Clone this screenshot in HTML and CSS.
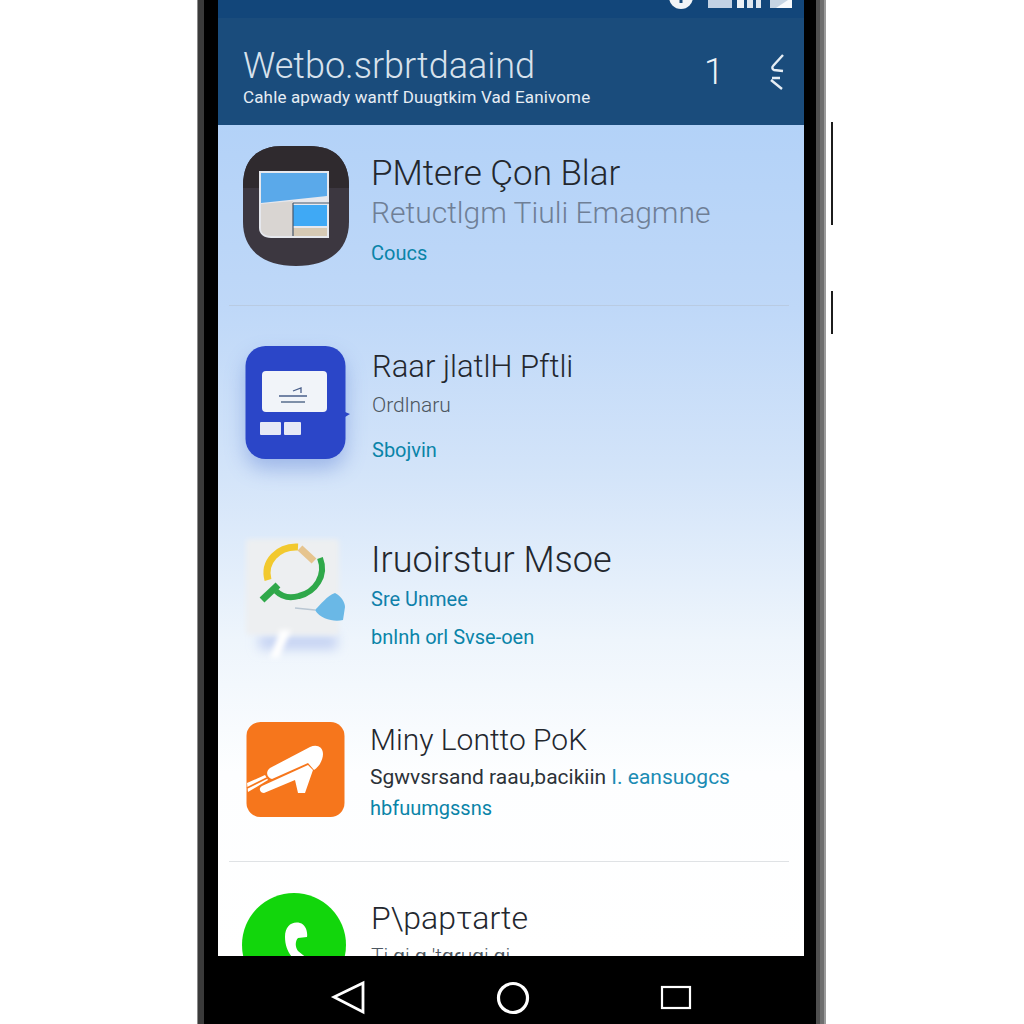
FILE: index.html
```html
<!DOCTYPE html>
<html lang="en">
<head>
<meta charset="utf-8">
<title>Phone app list</title>
<link rel="stylesheet" href="styles.css">
</head>
<body>
<div class="phone">
  <span class="side-btn side-btn-long"></span>
  <span class="side-btn side-btn-short"></span>
  <div class="screen">
    <header class="appbar">
      <div class="status">
        <svg class="status-icons" width="130" height="10" viewBox="0 0 130 10">
          <circle cx="13" cy="-3" r="12" fill="#f2f5f8"/>
          <path d="M13 0v3" stroke="#174a7c" stroke-width="3"/>
          <rect x="40" y="0" width="24" height="8" fill="#c3d2e4"/>
          <rect x="69" y="0" width="7" height="8" fill="#eef2f6"/>
          <rect x="79" y="0" width="6" height="8" fill="#dfe7ef"/>
          <rect x="88" y="0" width="5" height="8" fill="#dfe7ef"/>
          <path d="M102 0h22v8h-22z" fill="#c6d4e2"/>
          <path d="M108 8l12-8h4v8z" fill="#f7f9fb"/>
        </svg>
      </div>
      <div class="appbar-main">
        <div class="appbar-text">
          <div class="appbar-title">Wetbo.srbrtdaaind</div>
          <div class="appbar-sub">Cahle apwady wantf Duugtkim Vad Eanivome</div>
        </div>
        <div class="appbar-number">1</div>
        <svg class="appbar-icon" width="18" height="38" viewBox="0 0 18 38">
          <path d="M15 2L5 13c-1 1-1 3 1 4l9 1M4 25h8M3 27l11 9" fill="none" stroke="#e6edf4" stroke-width="2.4"/>
        </svg>
      </div>
    </header>
    <main class="list">
      <section class="row row-1">
        <svg class="icon icon-1" width="106" height="120" viewBox="0 0 106 120">
          <path d="M40 0h26c26 0 40 14 40 40v36c0 28-20 44-53 44S0 104 0 76V40C0 14 14 0 40 0z" fill="#3c3740"/>
          <path d="M40 0h26c26 0 40 14 40 40v2H0v-2C0 14 14 0 40 0z" fill="#2f2a2e"/>
          <path d="M16 25h70v67H28c-7 0-12-4-12-10z" fill="#e6e8ee"/>
          <path d="M18 27h66v23l-66 7z" fill="#5aa9ea"/>
          <path d="M18 58l32-3v35H28c-6 0-10-3-10-7z" fill="#d9d5d2"/>
          <path d="M50 59h34v21H50z" fill="#3fa9f5"/>
          <path d="M50 82h34v8H50z" fill="#d6c9b4"/>
          <path d="M50 57h36M50 57v33" stroke="#46586c" stroke-width="1.2"/>
        </svg>
        <div class="text">
          <div class="title title-1">PMtere Çon Blar</div>
          <div class="sub sub-gray">Retuctlgm Tiuli Emagmne</div>
          <div class="meta meta-1">Coucs</div>
        </div>
      </section>
      <section class="row row-2">
        <svg class="icon icon-2" width="106" height="114" viewBox="0 0 106 114">
          <rect x="0.5" y="0" width="100" height="113" rx="20" fill="#2b46c8"/>
          <path d="M100 66l5 2-5 3z" fill="#2b46c8"/>
          <rect x="17" y="25" width="65" height="41" rx="4" fill="#f1f4f9"/>
          <path d="M34 50h28M48 45l8-3v5" fill="none" stroke="#4a5f8a" stroke-width="1.3"/>
          <path d="M36 56h24" stroke="#7e8fa8" stroke-width="2"/>
          <rect x="15" y="76" width="21" height="13" rx="1" fill="#e6e9f6"/>
          <rect x="39" y="76" width="17" height="13" rx="1" fill="#e6e9f6"/>
        </svg>
        <div class="text">
          <div class="title title-2">Raar jlatlH Pftli</div>
          <div class="sub sub-small">Ordlnaru</div>
          <div class="meta meta-2">Sbojvin</div>
        </div>
      </section>
      <section class="row row-3">
        <svg class="icon icon-3" width="106" height="130" viewBox="0 0 106 130">
          <defs>
            <filter id="soft" filterUnits="userSpaceOnUse" x="-10" y="-10" width="126" height="150">
              <feGaussianBlur stdDeviation="2.5"/>
            </filter>
            <filter id="softer" filterUnits="userSpaceOnUse" x="-10" y="70" width="126" height="70">
              <feGaussianBlur stdDeviation="6"/>
            </filter>
          </defs>
          <rect x="16" y="99" width="78" height="14" fill="#c2d0f2" filter="url(#softer)"/>
          <rect x="3" y="3" width="93" height="96" rx="4" fill="#edeff1" filter="url(#soft)"/>
          <path d="M37 94h11l-12 28h-9z" fill="#fff" filter="url(#soft)"/>
          <path d="M25 44C20 26 35 10 55 11" fill="none" stroke="#f2c92e" stroke-width="7"/>
          <path d="M57 12l14 13" stroke="#e6c48e" stroke-width="7"/>
          <path d="M77 22C84 40 72 56 56 60 46 63 38 60 33 55" fill="none" stroke="#2fa84a" stroke-width="6"/>
          <path d="M35 49L19 64" stroke="#2fa84a" stroke-width="7"/>
          <path d="M52 72l20 2" stroke="#b9c6d2" stroke-width="1.5"/>
          <path d="M72 74C78 68 84 60 92 57 98 60 102 66 102 71L100 84C92 86 78 84 72 74z" fill="#6ab8e6"/>
        </svg>
        <div class="text">
          <div class="title title-3">Iruoirstur Msoe</div>
          <div class="sub sub-teal">Sre Unmee</div>
          <div class="meta meta-3">bnlnh orl Svse-oen</div>
        </div>
      </section>
      <section class="row row-4">
        <svg class="icon icon-4" width="100" height="96" viewBox="0 0 100 96">
          <rect x="0.5" y="0" width="98" height="95" rx="14" fill="#f6761c"/>
          <path d="M24 46L64 25C70 22 77 24 77 32 77 38 73 45 68 48L62 41 26 57C21 56 19 50 24 46z" fill="#fff"/>
          <path d="M62 43L67 48 59 71H52L49 58 18 71C14 71 12 66 16 64z" fill="#fff"/>
          <path d="M1 61L19 53 22 58 2 70z" fill="#fff"/>
          <path d="M1 66L21 56" stroke="#f6761c" stroke-width="1.6"/>
        </svg>
        <div class="text">
          <div class="title title-4">Miny Lontto PoK</div>
          <div class="sub sub-mixed">Sgwvsrsand raau,bacikiin <span class="sub-accent">I. eansuogcs</span></div>
          <div class="meta meta-4">hbfuumgssns</div>
        </div>
      </section>
      <section class="row row-5">
        <svg class="icon icon-5" width="104" height="104" viewBox="0 0 104 104">
          <circle cx="52" cy="52" r="52" fill="#12d60c"/>
          <path d="M58 30c-8-2-15 3-15 14 0 14 8 24 18 28l5-6-10-8c-3-4-3-10 0-13l9-1c1-6-2-13-7-14z" fill="#fff"/>
        </svg>
        <div class="text">
          <div class="title">P\papτarte</div>
          <div class="sub sub-small">Ti ɑi ɑ 'tɑɾuɑi ɑi</div>
        </div>
      </section>
    </main>
    <nav class="navbar">
      <svg width="36" height="36" viewBox="0 0 36 36"><path d="M33 3v29L4 17z" fill="none" stroke="#fff" stroke-width="2.8"/></svg>
      <svg width="34" height="34" viewBox="0 0 34 34"><circle cx="17" cy="17" r="14.5" fill="none" stroke="#fff" stroke-width="3.2"/></svg>
      <svg width="32" height="26" viewBox="0 0 32 26"><rect x="2" y="2" width="28" height="21" fill="none" stroke="#fff" stroke-width="2.2"/></svg>
    </nav>
  </div>
</div>
</body>
</html>
```

FILE: styles.css
```css
* { box-sizing: border-box; }
html, body { margin: 0; height: 100%; background: #fff; overflow: hidden; }
body { font-family: Roboto, "Liberation Sans", sans-serif; }

.phone {
  position: relative;
  width: 629px;
  height: 1024px;
  margin-left: 197px;
  padding: 0 22px 0 21px;
  background: linear-gradient(90deg,
    #8c8c8c 0 1px,
    #3a3a3a 1px 7px,
    #000 7px 619px,
    #4f4f4f 619px 623px,
    #6e6e6e 623px 627px,
    #9a9a9a 627px 629px);
}
.side-btn {
  position: absolute;
  left: 100%;
  margin-left: 5px;
  width: 2px;
  background: #1c1c1c;
}
.side-btn-long { top: 122px; height: 103px; }
.side-btn-short { top: 291px; height: 43px; }

.screen {
  display: flex;
  flex-direction: column;
  height: 1024px;
  width: 586px;
}

.appbar {
  flex: 0 0 125px;
  background: #1a4c7c;
  color: #eef3f8;
}
.status {
  height: 18px;
  background: #12467a;
  display: flex;
  justify-content: flex-end;
  padding-right: 6px;
}
.appbar-main {
  display: flex;
  align-items: flex-start;
  padding: 28px 18px 0 25px;
}
.appbar-text { flex: 1; }
.appbar-title {
  font-size: 36px;
  font-weight: 300;
  line-height: 40px;
  color: #d8e2ec;
}
.appbar-sub {
  font-size: 17px;
  line-height: 20px;
  margin-top: 1px;
  letter-spacing: .15px;
  color: #e6edf4;
}
.appbar-number {
  font-size: 36px;
  font-weight: 300;
  line-height: 48px;
  margin: 2px 44px 0 0;
}
.appbar-icon { margin-top: 7px; }

.list {
  flex: 1;
  min-height: 0;
  overflow: hidden;
  background: linear-gradient(180deg, #b3d2f8 0%, #bfd8f8 22%, #d3e4f9 42%, #eef5fc 62%, #fdfeff 78%, #fff 100%);
}
.row {
  display: flex;
  align-items: flex-start;
  padding-left: 25px;
}
.row-1 { height: 181px; padding-top: 21px; }
.row-2 { height: 190px; padding-top: 40px; }
.row-3 { height: 189px; padding-top: 40px; }
.row-4 { height: 177px; padding-top: 37px; }
.row-5 { height: 200px; padding-top: 31px; }
.row-1, .row-4 { position: relative; }
.row-1::after, .row-4::after {
  content: "";
  position: absolute;
  left: 11px;
  right: 15px;
  bottom: 0;
  height: 1px;
}
.row-1::after { background: #b9cbe2; }
.row-4::after { background: #dfe2e5; }

.icon { flex: none; }
.icon-1 { margin-right: 22px; }
.icon-2 { margin: 0 21px 0 2px; filter: drop-shadow(0 10px 10px rgba(50, 90, 200, .32)); }
.icon-3 { margin-right: 22px; }
.icon-4 { margin: 0 24px 0 3px; }
.icon-5 { margin: 0 25px 0 -1px; }

.text { min-width: 0; white-space: nowrap; }
.title {
  font-size: 32px;
  font-weight: 300;
  line-height: 40px;
  color: #23272e;
}
.title-1 { font-size: 35px; }
.title-2 { font-size: 31px; }
.title-3 { font-size: 36px; }
.title-4 { font-size: 30px; }
.sub { font-size: 30px; line-height: 30px; font-weight: 300; }
.sub-gray { color: #6f7f96; margin-top: 4px; }
.sub-small { font-size: 21px; color: #4c5660; margin-top: 3px; }
.sub-teal { font-size: 20px; line-height: 24px; font-weight: 400; color: #0f80aa; margin-top: 7px; }
.sub-mixed { font-size: 21px; font-weight: 400; color: #2c3238; margin-top: 2px; }
.sub-accent { color: #1b8cb4; }
.meta { font-size: 20px; line-height: 24px; color: #0a84a8; }
.meta-1 { margin-top: 13px; }
.meta-2 { margin-top: 18px; }
.meta-3 { margin-top: 14px; }
.meta-4 { margin-top: 4px; }
.row-1 .text { margin-top: 8px; }
.row-2 .text { margin-top: 1px; }
.row-3 .text { margin-top: 4px; }
.row-4 .text { margin-top: -2px; }
.row-5 .text { margin-top: 5px; }

.navbar {
  flex: 0 0 68px;
  background: #000;
  display: flex;
  align-items: center;
  padding: 16px 0 0;
  gap: 130px;
  justify-content: center;
}
```
